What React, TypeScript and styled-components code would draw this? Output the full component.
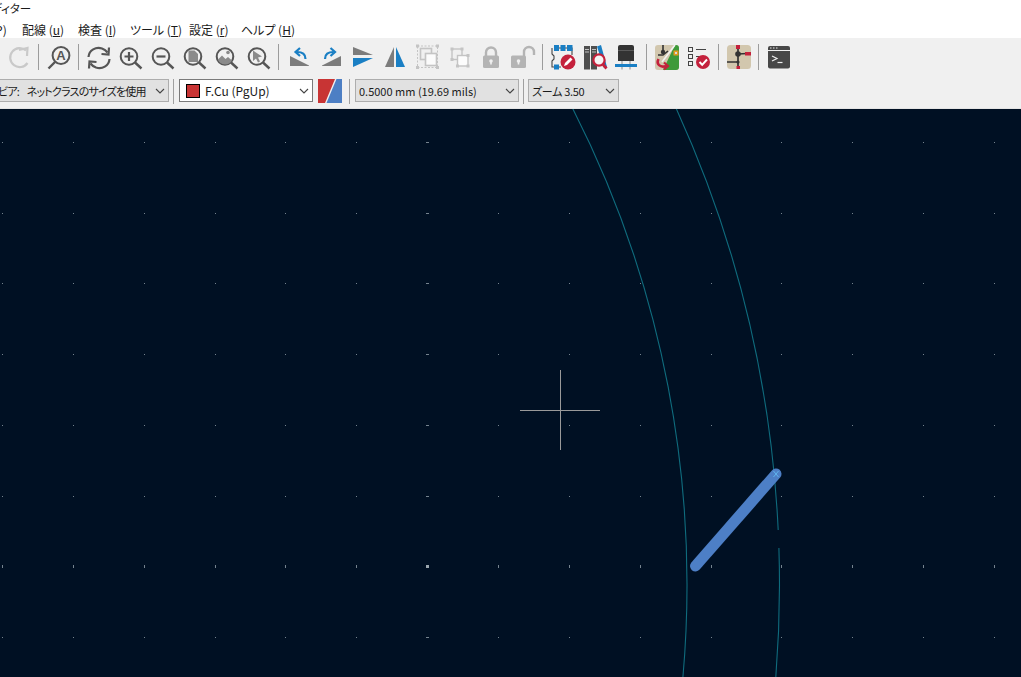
import React from "react";
import styled, { createGlobalStyle } from "styled-components";

const Global = createGlobalStyle`
  html, body { margin: 0; padding: 0; background: #fff; overflow: hidden; }
  #root { width: 1021px; height: 677px; }
`;

const UI_FONT = `"Noto Sans CJK JP", "Noto Sans", sans-serif`;

const Window = styled.div`
  width: 1021px;
  height: 677px;
  display: flex;
  flex-direction: column;
  overflow: hidden;
  font-family: ${UI_FONT};
  font-feature-settings: "palt";
  color: #1a1a1a;
`;
const TitleBar = styled.div`
  height: 18px;
  flex: none;
  background: #fff;
  font-size: 11.5px;
  line-height: 16px;
  white-space: nowrap;
  overflow: hidden;
`;
const TitleText = styled.span`
  display: inline-block;
  margin-left: -9px;
`;
const MenuBar = styled.nav`
  height: 20px;
  flex: none;
  background: #fff;
  display: flex;
  font-size: 12px;
  line-height: 24px;
  white-space: nowrap;
  overflow: hidden;
`;
const MenuItem = styled.span<{ $l: number; $w: number }>`
  flex: none;
  margin-left: ${(p) => p.$l}px;
  width: ${(p) => p.$w}px;
  u { text-underline-offset: 1px; }
`;
const ToolBar = styled.div`
  height: 36px;
  flex: none;
  background: #f0f0f0;
  display: flex;
  align-items: flex-start;
  padding: 6px 0 0 4px;
  box-sizing: border-box;
`;
const ToolButton = styled.div`
  width: 32px;
  height: 28px;
  flex: none;
  padding: 2px 2px 0 0;
  box-sizing: border-box;
  display: flex;
  justify-content: center;
`;
const Sep = styled.div`
  width: 1px;
  height: 26px;
  flex: none;
  margin: 0 5px 0 2px;
  background: #9c9c9c;
`;
const IconSvg = styled.svg`
  display: block;
  width: 24px;
  height: 24px;
  overflow: visible;
  flex: none;
`;
const AuxBar = styled.div`
  height: 35px;
  flex: none;
  background: #f0f0f0;
  border-bottom: 1px solid #e4e4e4;
  display: flex;
  align-items: flex-start;
  padding-top: 5px;
  box-sizing: border-box;
`;
const Combo = styled.div<{ $w: number; $white?: boolean; $ml?: number }>`
  width: ${(p) => p.$w}px;
  margin-left: ${(p) => p.$ml ?? 0}px;
  height: 23px;
  flex: none;
  box-sizing: border-box;
  display: flex;
  align-items: center;
  padding: 0 3px 0 3px;
  font-size: 11px;
  background: ${(p) => (p.$white ? "#fff" : "#e1e1e1")};
  border: 1px solid ${(p) => (p.$white ? "#7a7a7a" : "#adadad")};
  white-space: nowrap;
  overflow: hidden;
`;
const ComboText = styled.span<{ $ls?: number; $ws?: number; $size?: number }>`
  flex: 1;
  min-width: 0;
  overflow: hidden;
  letter-spacing: ${(p) => p.$ls ?? 0}px;
  word-spacing: ${(p) => p.$ws ?? 0}px;
  font-size: ${(p) => p.$size ?? 11}px;
`;
const Swatch = styled.span`
  width: 14px;
  height: 14px;
  flex: none;
  box-sizing: border-box;
  background: #c83434;
  border: 1px solid #000;
  margin: 0 5px 0 3px;
`;
const AuxSep = styled.div<{ $l: number; $r: number }>`
  width: 1px;
  height: 25px;
  flex: none;
  background: #a0a0a0;
  margin: 0 ${(p) => p.$r}px 0 ${(p) => p.$l}px;
`;
const LayerPair = styled.svg`
  width: 24px;
  height: 24px;
  flex: none;
  margin-left: 5px;
  display: block;
`;
const Canvas = styled.div`
  flex: 1;
  min-height: 0;
  background: #001023;
`;
const CanvasSvg = styled.svg`
  display: block;
  width: 100%;
  height: 100%;
`;
const ChevronSvg = styled.svg`
  flex: none;
  display: block;
`;

const Chevron = () => (
  <ChevronSvg width="10" height="6" viewBox="0 0 10 6">
    <path d="M1 1 L5 5 L9 1" fill="none" stroke="#444" strokeWidth="1.1" />
  </ChevronSvg>
);

const G = "#565656";
const L = "#c4c4c4";
const B = "#1a7fc4";
const R = "#c4213c";

const Icon: React.FC<{ children: React.ReactNode }> = ({ children }) => (
  <IconSvg viewBox="0 0 24 24">{children}</IconSvg>
);

const Mag: React.FC<{ children?: React.ReactNode }> = ({ children }) => (
  <Icon>
    <circle cx="10" cy="10.5" r="8.3" fill="none" stroke={G} strokeWidth="2" />
    <path d="M16 16.5 L22.5 22.5" stroke={G} strokeWidth="2.4" />
    {children}
  </Icon>
);

const RedoI = () => (
  <Icon>
    <path d="M19 4.5 A9.5 9.5 0 1 0 20.5 17" fill="none" stroke="#c9c9c9" strokeWidth="2.2" />
    <path d="M12 4 L20.5 2 L20 10" fill="none" stroke="#c9c9c9" strokeWidth="2.2" />
  </Icon>
);
const ZoomA = () => (
  <Icon>
    <circle cx="14" cy="9.5" r="8.4" fill="none" stroke={G} strokeWidth="2" />
    <path d="M8 16 L1.5 22.5" stroke={G} strokeWidth="2.4" />
    <text x="14" y="14" textAnchor="middle" fontFamily="Liberation Sans, sans-serif" fontWeight="700" fontSize="13" fill={G}>A</text>
  </Icon>
);
const RefreshI = () => (
  <Icon>
    <path d="M1.5 11 C2 4 9 0.5 15 2.5 C17.5 3.4 19 4.5 20.5 6.5" fill="none" stroke={G} strokeWidth="2.2" />
    <path d="M22 1.5 L21.5 8.5 L14.5 8" fill="none" stroke={G} strokeWidth="2.2" />
    <path d="M22.5 13 C22 20 15 23.5 9 21.5 C6.5 20.6 5 19.5 3.5 17.5" fill="none" stroke={G} strokeWidth="2.2" />
    <path d="M2 22.5 L2.5 15.5 L9.5 16" fill="none" stroke={G} strokeWidth="2.2" />
  </Icon>
);
const ZoomIn = () => (
  <Mag>
    <path d="M5.5 10.5 H14.5 M10 6 V15" stroke={G} strokeWidth="2.2" />
  </Mag>
);
const ZoomOut = () => (
  <Mag>
    <path d="M5.5 10.5 H14.5" stroke={G} strokeWidth="2.2" />
  </Mag>
);
const ZoomFit = () => (
  <Mag>
    <path d="M5.5 4.5 H11.5 L15 8 V16 H5.5 Z" fill="#8a8a8a" />
  </Mag>
);
const ZoomPic = () => (
  <Mag>
    <path d="M3 13.5 L7 9.5 L10.5 13 L13 11 L17 14.5 A8 8 0 0 1 3 14 Z" fill="#8a8a8a" />
    <circle cx="13" cy="6.5" r="1.8" fill="#8a8a8a" />
  </Mag>
);
const ZoomSel = () => (
  <Mag>
    <path d="M6 4.5 L15 10.5 L11 11.5 L13 15.5 L11 16.5 L9 12.5 L6 15 Z" fill="#8a8a8a" />
  </Mag>
);
const RotL = () => (
  <Icon>
    <path d="M3 20 L22 20 L22 19.5 L3 10 Z" fill="#7c7c7c" />
    <path d="M18.5 13 C18.5 8 15.5 6 10 6" fill="none" stroke={B} strokeWidth="2.2" />
    <path d="M13 2 L8.5 6 L13 10" fill="none" stroke={B} strokeWidth="2.2" />
  </Icon>
);
const RotR = () => (
  <Icon>
    <path d="M22 20 L8 20 L3 20 L3 19.5 L22 10 Z" fill="#7c7c7c" />
    <path d="M6 13 C6 8 9 6 14.5 6" fill="none" stroke={B} strokeWidth="2.2" />
    <path d="M11.5 2 L16 6 L11.5 10" fill="none" stroke={B} strokeWidth="2.2" />
  </Icon>
);
const MirrorH = () => (
  <Icon>
    <path d="M2 1 L22 9 L2 9 Z" fill="#7c7c7c" />
    <path d="M2 12 L22 12 L2 21 Z" fill={B} />
  </Icon>
);
const MirrorV = () => (
  <Icon>
    <path d="M11 1 L2 21 L11 21 Z" fill="#7c7c7c" />
    <path d="M13 1 L22 21 L13 21 Z" fill={B} />
  </Icon>
);
const Corner: React.FC<{ x: number; y: number; s?: number }> = ({ x, y, s = 3 }) => (
  <rect x={x} y={y} width={s} height={s} fill={L} />
);
const GroupI = () => (
  <Icon>
    <rect x="2.5" y="0" width="20" height="21.5" fill="none" stroke={L} strokeWidth="1" strokeDasharray="2 1.5" />
    <Corner x={1} y={-1.5} /><Corner x={21} y={-1.5} /><Corner x={1} y={20} /><Corner x={21} y={20} />
    <rect x="5.5" y="2.5" width="11" height="11" fill="none" stroke={L} strokeWidth="1.6" />
    <rect x="10.5" y="7.5" width="11" height="12" fill="#fbfbfb" stroke={L} strokeWidth="1.6" />
  </Icon>
);
const UngroupI = () => (
  <Icon>
    <rect x="5" y="3" width="10" height="10.5" fill="none" stroke={L} strokeWidth="1.4" />
    <rect x="10.5" y="9.5" width="10.5" height="10.5" fill="#fcfcfc" stroke={L} strokeWidth="1.4" />
    <Corner x={3.5} y={1.5} /><Corner x={13.5} y={1.5} /><Corner x={3.5} y={12} /><Corner x={19.5} y={8} /><Corner x={9} y={18.5} /><Corner x={19.5} y={18.5} />
  </Icon>
);
const LockI = () => (
  <Icon>
    <path d="M7 10 V6.5 A5 5 0 0 1 17 6.5 V10" fill="none" stroke="#b4b4b4" strokeWidth="2.4" />
    <rect x="4" y="9.5" width="16" height="12.5" rx="1.5" fill="#b4b4b4" />
    <circle cx="12" cy="15" r="1.8" fill="#f0f0f0" />
    <rect x="11.2" y="15" width="1.6" height="3.5" fill="#f0f0f0" />
  </Icon>
);
const UnlockI = () => (
  <Icon>
    <path d="M13 10 V6 A5 5 0 0 1 23 6 V9" fill="none" stroke="#b4b4b4" strokeWidth="2.4" />
    <rect x="0" y="9.5" width="15" height="12.5" rx="1.5" fill="#b4b4b4" />
    <circle cx="7.5" cy="15" r="1.8" fill="#f0f0f0" />
    <rect x="6.7" y="15" width="1.6" height="3.5" fill="#f0f0f0" />
  </Icon>
);
const NetI = () => (
  <Icon>
    <path d="M3 2 H21 V9 M1 2 V8 L3 10 V13 L1 15 V21 H10" fill="none" stroke="#444" strokeWidth="1.1" />
    <rect x="3" y="-1" width="5" height="6" fill={B} />
    <rect x="9.5" y="-1" width="5" height="6" fill={B} />
    <rect x="16" y="-1" width="5.5" height="6" fill={B} />
    <rect x="3" y="18.5" width="5" height="5" fill={B} />
    <circle cx="17" cy="16" r="7.5" fill={R} />
    <path d="M13 20 L14 17 L19.5 11.5 L21.5 13.5 L16 19 Z" fill="#fff" />
  </Icon>
);
const LibI = () => (
  <Icon>
    <rect x="1" y="0" width="6" height="23.5" fill="#4f4f4f" />
    <rect x="8" y="0" width="6" height="23.5" fill="#4f4f4f" />
    <path d="M2 3.5 H6 M2 6 H6 M9 3.5 H13 M9 6 H13" stroke="#cfcfcf" strokeWidth="0.9" />
    <path d="M14 0.5 L18 -1 L24 21 L21 22 Z" fill={B} />
    <circle cx="16" cy="14" r="5.6" fill="#f5f5f5" stroke={R} strokeWidth="2.2" />
    <path d="M20 18.5 L23.5 22.5" stroke={R} strokeWidth="2.8" />
  </Icon>
);
const FootI = () => (
  <Icon>
    <path d="M7 14 V23.5 M15 14 V23.5" stroke="#8c8c8c" strokeWidth="1" />
    <path d="M5 -1 H17 A2 2 0 0 1 19 1 V15 H3 V1 A2 2 0 0 1 5 -1 Z" fill="#333" />
    <rect x="3" y="4" width="16" height="1" fill="#5a5a5a" />
    <rect x="0" y="18" width="22" height="3" fill={B} />
  </Icon>
);
const PcbI = () => (
  <Icon>
    <rect x="0" y="-1" width="24" height="25" rx="3" fill="#d2c7ae" />
    <path d="M20 -1 H21 A3 3 0 0 1 24 2 V21 A3 3 0 0 1 21 24 H8 Z" fill="#3e9a3a" />
    <path d="M20 -1 L7 16" stroke="#f2f2f2" strokeWidth="1.6" />
    <rect x="18.5" y="4.5" width="5" height="5" fill="#e89a20" />
    <rect x="20" y="6" width="2" height="2" fill="#d8d8d8" />
    <path d="M8 -1 V8 M3 9 H8 L13 5" stroke="#333" strokeWidth="1.6" fill="none" />
    <circle cx="8" cy="6" r="2.2" fill="#333" />
    <path d="M3.5 13 C1 18 5 22 11 20" fill="none" stroke={R} strokeWidth="2.6" />
    <path d="M9 16.5 L13 20 L9 23.5" fill="none" stroke={R} strokeWidth="2.2" />
  </Icon>
);
const CheckI = () => (
  <Icon>
    <rect x="1.5" y="1.5" width="4" height="4" fill="none" stroke="#444" strokeWidth="1" />
    <rect x="1.5" y="8.5" width="4" height="4" fill="none" stroke="#444" strokeWidth="1" />
    <rect x="1.5" y="15.5" width="4" height="4" fill="none" stroke="#444" strokeWidth="1" />
    <path d="M9 3.5 H19 M9 10.5 H13" stroke="#444" strokeWidth="1" />
    <circle cx="16" cy="16" r="7" fill={R} />
    <path d="M12.5 16 L15.2 18.8 L20 13.5" fill="none" stroke="#fff" strokeWidth="2" />
  </Icon>
);
const SchI = () => (
  <Icon>
    <rect x="0" y="-1" width="24" height="24" rx="3.5" fill="#d2c7ae" />
    <path d="M11 -1 V21 M0 16 H11 M11 8 L20 7.5" stroke="#333" strokeWidth="1.7" fill="none" />
    <circle cx="11" cy="8" r="2.8" fill="#333" />
    <circle cx="11" cy="16" r="1.6" fill="#333" />
    <rect x="9" y="-1" width="4" height="4" fill={R} />
    <rect x="18" y="6" width="6" height="3.5" fill={R} />
    <rect x="9.5" y="20" width="3.5" height="3" fill={R} />
  </Icon>
);
const TermI = () => (
  <Icon>
    <rect x="1" y="0" width="22" height="22.5" rx="2" fill="#474747" />
    <rect x="1" y="4" width="22" height="1" fill="#f0f0f0" />
    <path d="M3 2 H4.5 M6 2 H7.5 M9 2 H10.5" stroke="#e8e8e8" strokeWidth="1.2" />
    <path d="M5 10 L10 12.5 L5 15" fill="none" stroke="#eee" strokeWidth="1.2" />
    <path d="M10.5 16.5 H15.5" stroke="#eee" strokeWidth="1.2" />
  </Icon>
);

const XS = Array.from({ length: 15 }, (_, i) => 2 + i * 70.86);
const YS = Array.from({ length: 8 }, (_, i) => 142 + i * 70.71);

const dots = XS.flatMap((x, i) =>
  YS.map((y, j) => {
    const cx = Math.round(x);
    const cy = Math.round(y);
    const majorX = i === 6;
    const majorY = j === 6;
    return (
      <rect
        key={`${i}-${j}`}
        x={majorX ? cx - 1 : cx}
        y={majorY ? cy - 1 : cy}
        width={majorX ? 3 : 1}
        height={majorY ? 3 : 1}
        fill={majorX && majorY ? "#9aa6ae" : "#75838e"}
      />
    );
  })
);

const arc = (maxX: number, r: number, y1: number, y2: number) => {
  const cy = 585;
  const cx = maxX - r;
  const pt = (y: number) => cx + Math.sqrt(r * r - (y - cy) * (y - cy));
  return `M${pt(y1).toFixed(1)} ${y1} A${r} ${r} 0 0 1 ${pt(y2).toFixed(1)} ${y2}`;
};

const TRACE = "#0f6c7e";

export default function App() {
  return (
    <Window>
      <Global />
      <TitleBar><TitleText>ディター</TitleText></TitleBar>
      <MenuBar>
        <MenuItem $l={-9} $w={31}>(P)</MenuItem>
        <MenuItem $l={0} $w={56}>配線 (<u>u</u>)</MenuItem>
        <MenuItem $l={0} $w={52}>検査 (<u>I</u>)</MenuItem>
        <MenuItem $l={0} $w={59}>ツール (<u>T</u>)</MenuItem>
        <MenuItem $l={0} $w={52}>設定 (<u>r</u>)</MenuItem>
        <MenuItem $l={0} $w={60}>ヘルプ (<u>H</u>)</MenuItem>
      </MenuBar>
      <ToolBar>
        <ToolButton><RedoI /></ToolButton>
        <Sep />
        <ToolButton><ZoomA /></ToolButton>
        <Sep />
        <ToolButton><RefreshI /></ToolButton>
        <ToolButton><ZoomIn /></ToolButton>
        <ToolButton><ZoomOut /></ToolButton>
        <ToolButton><ZoomFit /></ToolButton>
        <ToolButton><ZoomPic /></ToolButton>
        <ToolButton><ZoomSel /></ToolButton>
        <Sep />
        <ToolButton><RotL /></ToolButton>
        <ToolButton><RotR /></ToolButton>
        <ToolButton><MirrorH /></ToolButton>
        <ToolButton><MirrorV /></ToolButton>
        <ToolButton><GroupI /></ToolButton>
        <ToolButton><UngroupI /></ToolButton>
        <ToolButton><LockI /></ToolButton>
        <ToolButton><UnlockI /></ToolButton>
        <Sep />
        <ToolButton><NetI /></ToolButton>
        <ToolButton><LibI /></ToolButton>
        <ToolButton><FootI /></ToolButton>
        <Sep />
        <ToolButton><PcbI /></ToolButton>
        <ToolButton><CheckI /></ToolButton>
        <Sep />
        <ToolButton><SchI /></ToolButton>
        <Sep />
        <ToolButton><TermI /></ToolButton>
      </ToolBar>
      <AuxBar>
        <Combo $w={175} $ml={-6}>
          <ComboText $ls={-0.8} $ws={6}>ビア: ネットクラスのサイズを使用</ComboText>
          <Chevron />
        </Combo>
        <AuxSep $l={4} $r={5} />
        <Combo $w={134} $white>
          <Swatch />
          <ComboText $size={12}>F.Cu (PgUp)</ComboText>
          <Chevron />
        </Combo>
        <LayerPair viewBox="0 0 24 24">
          <path d="M0 0 H17 L7 24 H0 Z" fill="#c83434" />
          <path d="M24 0 H18.5 L8.5 24 H24 Z" fill="#4d7fc4" />
        </LayerPair>
        <AuxSep $l={7} $r={5} />
        <Combo $w={164}>
          <ComboText>0.5000 mm (19.69 mils)</ComboText>
          <Chevron />
        </Combo>
        <AuxSep $l={4} $r={4} />
        <Combo $w={91}>
          <ComboText $ls={-0.3}>ズーム 3.50</ComboText>
          <Chevron />
        </Combo>
      </AuxBar>
      <Canvas>
        <CanvasSvg viewBox="0 109 1021 568">
          {dots}
          <path d={arc(687, 1050, 100, 690)} fill="none" stroke={TRACE} strokeWidth="1.1" />
          <path d={arc(779.5, 1151, 100, 530)} fill="none" stroke={TRACE} strokeWidth="1.1" />
          <path d={arc(779.5, 1151, 548, 690)} fill="none" stroke={TRACE} strokeWidth="1.1" />
          <path d="M695.5 566 L776 474" stroke="#4d7fc6" strokeWidth="11" strokeLinecap="round" />
          <path d="M773.5 471 L778.5 477 M778.5 471 L773.5 477" stroke="#5fb4ee" strokeWidth="1" />
          <path d="M520 410.5 H600 M560.5 370 V450" stroke="#9a9a9a" strokeWidth="1" />
        </CanvasSvg>
      </Canvas>
    </Window>
  );
}
